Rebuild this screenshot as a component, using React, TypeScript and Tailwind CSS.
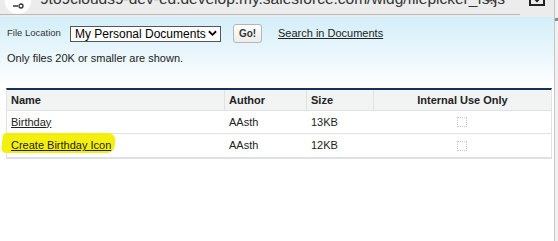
const files = [
  { name: "Birthday", author: "AAsth", size: "13KB", marked: false },
  { name: "Create Birthday Icon", author: "AAsth", size: "12KB", marked: true },
];

function BrowserBar() {
  return (
    <div className="relative h-[17px] bg-[#ececec] overflow-hidden">
      <div className="absolute left-[5px] top-[-12px] w-[26px] h-[26px] rounded-full bg-white flex items-end justify-center pb-[5px]">
        <svg width="12" height="6" viewBox="0 0 12 6">
          <line x1="1" y1="3" x2="6" y2="3" stroke="#333" strokeWidth="1.5" />
          <circle cx="9" cy="3" r="2" fill="none" stroke="#333" strokeWidth="1.3" />
        </svg>
      </div>
      <div className="absolute left-[40px] top-[-10px] w-[465px] overflow-hidden text-[15.5px] leading-[18px] text-[#333] whitespace-nowrap">
        9to9clouds9-dev-ed.develop.my.salesforce.com/widg/filepicker_fs.js...
      </div>
      <div className="absolute left-[484px] top-[-6px]">
        <svg width="14" height="12" viewBox="0 0 14 12">
          <circle cx="5" cy="2" r="5" fill="none" stroke="#444" strokeWidth="1.4" />
          <line x1="8.5" y1="5.5" x2="12" y2="9" stroke="#444" strokeWidth="1.4" />
        </svg>
      </div>
      <div className="absolute left-[528px] top-[-4px]">
        <svg width="18" height="12" viewBox="0 0 18 12">
          <path d="M9 0 L9 4 M5 1 L9 5 L13 1" fill="none" stroke="#222" strokeWidth="2" />
          <path d="M2 4 L2 9 L16 9 L16 4" fill="none" stroke="#222" strokeWidth="2" />
        </svg>
      </div>
      <div className="absolute left-0 top-[14px] w-[520px] h-px bg-[#b8b8b8]" />
    </div>
  );
}

export default function App() {
  return (
    <div className="w-[558px] h-[241px] flex bg-white overflow-hidden font-['Liberation_Sans',Arial,sans-serif] text-[#222]">
      <div className="w-[554px] flex flex-col">
        <BrowserBar />
        <div className="h-[71px] bg-gradient-to-b from-[#d3eef9] to-white px-[7px] pt-[7px]">
          <div className="flex items-center h-[19px]">
            <span className="w-[63px] text-[9.5px] text-[#333] whitespace-nowrap">File Location</span>
            <div className="w-[151px] h-[16px] border border-[#555] bg-white flex items-center justify-between pl-[4px] pr-[3px]">
              <span className="text-[12px] leading-none text-black whitespace-nowrap">My Personal Documents</span>
              <svg width="9" height="7" viewBox="0 0 10 7">
                <path d="M1 1 L5 5 L9 1" fill="none" stroke="#000" strokeWidth="2" />
              </svg>
            </div>
            <button className="ml-[12px] w-[29px] h-[19px] border border-[#b5b5b5] rounded-[3px] bg-gradient-to-b from-white to-[#ececec] text-[10px] font-bold text-[#333] flex items-center justify-center">
              Go!
            </button>
            <a className="ml-[16px] text-[11px] underline text-[#222]">Search in Documents</a>
          </div>
          <div className="mt-[7px] text-[11px] text-[#222]">Only files 20K or smaller are shown.</div>
        </div>
        <div className="ml-[6px] w-[546px] border-t-2 border-[#16325c] border-x border-b-2 border-x-[#e0e3e5] border-b-[#dde1e3]">
          <div className="flex h-[21px] bg-[#f2f3f3] border-b border-[#e0e3e5] text-[11px] font-bold items-center">
            <div className="w-[217px] pl-[4px]">Name</div>
            <div className="w-[82px] h-full flex items-center border-l border-[#e0e3e5] pl-[4px]">Author</div>
            <div className="w-[67px] h-full flex items-center border-l border-[#e0e3e5] pl-[4px]">Size</div>
            <div className="flex-1 h-full flex items-center justify-center border-l border-[#e0e3e5]">Internal Use Only</div>
          </div>
          {files.map((f, i) => (
            <div
              key={f.name}
              className={`flex h-[23px] items-center text-[11px] ${i < files.length - 1 ? "border-b border-[#e3e3e3]" : ""}`}
            >
              <div className="w-[217px] pl-[4px] relative">
                {f.marked && (
                  <span className="absolute left-[-5px] top-[-4px] w-[113px] h-[20px] bg-[#f5ef0c] rounded-[4px_8px_7px_5px] -skew-x-6" />
                )}
                <a className="relative underline text-[#222]">{f.name}</a>
              </div>
              <div className="w-[82px] pl-[5px]">{f.author}</div>
              <div className="w-[67px] pl-[5px]">{f.size}</div>
              <div className="flex-1 flex justify-center">
                <span className="w-[10px] h-[10px] border border-dotted border-[#c8c8c8] bg-white" />
              </div>
            </div>
          ))}
        </div>
      </div>
      <div className="w-[4px] border-l border-[#c6c6c6] bg-[#f1f1f1] relative">
        <div className="absolute top-[18px] left-0 w-[3px] h-[3px] bg-[#888]" />
      </div>
    </div>
  );
}
